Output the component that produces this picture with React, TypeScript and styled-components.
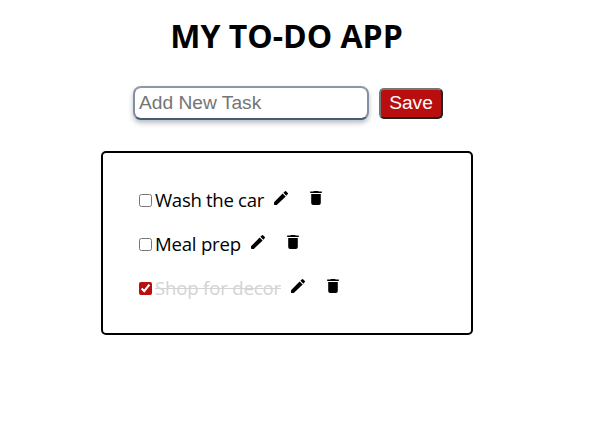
import React, { useState } from "react";
import styled, { createGlobalStyle } from "styled-components";

const GlobalStyle = createGlobalStyle`
  * { box-sizing: border-box; }
  body {
    margin: 0;
    background: #fff;
    color: #000;
    font-family: "Open Sans", "Noto Sans", sans-serif;
  }
`;

const Page = styled.main`
  display: flex;
  flex-direction: column;
  align-items: center;
  width: 573px;
  padding-top: 14px;
`;

const Title = styled.h1`
  margin: 0;
  height: 44px;
  line-height: 43px;
  font-size: 32px;
  font-weight: 700;
  white-space: nowrap;
`;

const TaskForm = styled.form`
  display: flex;
  align-items: center;
  gap: 10px;
  margin: 28px 0 0 3px;
`;

const TaskInput = styled.input`
  width: 236px;
  height: 34px;
  padding: 1px 4px;
  border: 2px solid;
  border-color: #8c98a8 #8490a1 #4a5a70 #8490a1;
  border-radius: 8px;
  outline: none;
  background: #fff;
  box-shadow: 0 3px 5px rgba(50, 70, 95, 0.35);
  font: 19.2px "Liberation Sans", Arial, sans-serif;
  &::placeholder { color: #757575; opacity: 1; }
`;

const SaveButton = styled.button`
  width: 64px;
  height: 31px;
  padding: 0;
  border: 2px solid;
  border-color: #767676 #212121 #212121 #767676;
  border-radius: 5px;
  background: #b90e0e;
  color: #fff;
  font: 19.2px "Liberation Sans", Arial, sans-serif;
`;

const TaskList = styled.ul`
  width: 372px;
  height: 184px;
  margin: 31px 0 0 1px;
  padding: 25px 36px;
  border: 2px solid #000;
  border-radius: 5px;
  list-style: none;
`;

const TaskRow = styled.li`
  display: flex;
  align-items: center;
  height: 44px;
`;

const Checkbox = styled.input`
  width: 13px;
  height: 13px;
  margin: 0 3px 0 0;
  accent-color: #b90e0e;
`;

const TaskText = styled.span<{ $done: boolean; $tracking: number }>`
  font-size: 18.6px;
  line-height: 26px;
  white-space: nowrap;
  letter-spacing: ${({ $tracking }) => $tracking}px;
  color: ${({ $done }) => ($done ? "#d3d3d3" : "#000")};
  text-decoration: ${({ $done }) => ($done ? "line-through" : "none")};
  text-decoration-thickness: 1px;
`;

const IconButton = styled.button`
  display: flex;
  margin: 0 0 4px 9px;
  padding: 0;
  border: 0;
  background: none;
  color: #000;
  & + & { margin-left: 19px; }
`;

const Icon = styled.svg`
  width: 16px;
  height: 16px;
  fill: currentColor;
`;

const PencilIcon = () => (
  <Icon viewBox="0 0 16 16">
    <path d="M1 12.3V14.3Q1 15 1.7 15H3.8L12.7 6.5 9.6 3.4Z" />
    <path d="M10.4 2.7 12 1.2Q12.5.8 13 1.2L14.8 3Q15.3 3.5 14.8 4L13.4 5.7Z" />
  </Icon>
);

const TrashIcon = () => (
  <Icon viewBox="0 0 16 16">
    <path d="M2.2 1.6H5.3L6 .9H10L10.7 1.6H13.8V3.1H2.2Z" />
    <path d="M3.2 3.9H12.8V13Q12.8 15 10.8 15H5.2Q3.2 15 3.2 13Z" />
  </Icon>
);

const initialTasks = [
  { text: "Wash the car", done: false, tracking: -0.31 },
  { text: "Meal prep", done: false, tracking: -0.22 },
  { text: "Shop for decor", done: true, tracking: -0.18 },
];

export default function App() {
  const [tasks, setTasks] = useState(initialTasks);
  const [draft, setDraft] = useState("");

  const save = (event: React.FormEvent) => {
    event.preventDefault();
    if (!draft.trim()) return;
    setTasks([...tasks, { text: draft.trim(), done: false, tracking: -0.2 }]);
    setDraft("");
  };

  const toggle = (index: number) =>
    setTasks(tasks.map((task, i) => (i === index ? { ...task, done: !task.done } : task)));

  const remove = (index: number) => setTasks(tasks.filter((_, i) => i !== index));

  const edit = (index: number) => {
    setDraft(tasks[index].text);
    remove(index);
  };

  return (
    <>
      <GlobalStyle />
      <Page>
        <Title>MY TO-DO APP</Title>
        <TaskForm onSubmit={save}>
          <TaskInput
            placeholder="Add New Task"
            value={draft}
            onChange={(event) => setDraft(event.target.value)}
          />
          <SaveButton type="submit">Save</SaveButton>
        </TaskForm>
        <TaskList>
          {tasks.map((task, index) => (
            <TaskRow key={index}>
              <Checkbox type="checkbox" checked={task.done} onChange={() => toggle(index)} />
              <TaskText $done={task.done} $tracking={task.tracking}>{task.text}</TaskText>
              <IconButton aria-label="Edit" onClick={() => edit(index)}>
                <PencilIcon />
              </IconButton>
              <IconButton aria-label="Delete" onClick={() => remove(index)}>
                <TrashIcon />
              </IconButton>
            </TaskRow>
          ))}
        </TaskList>
      </Page>
    </>
  );
}
